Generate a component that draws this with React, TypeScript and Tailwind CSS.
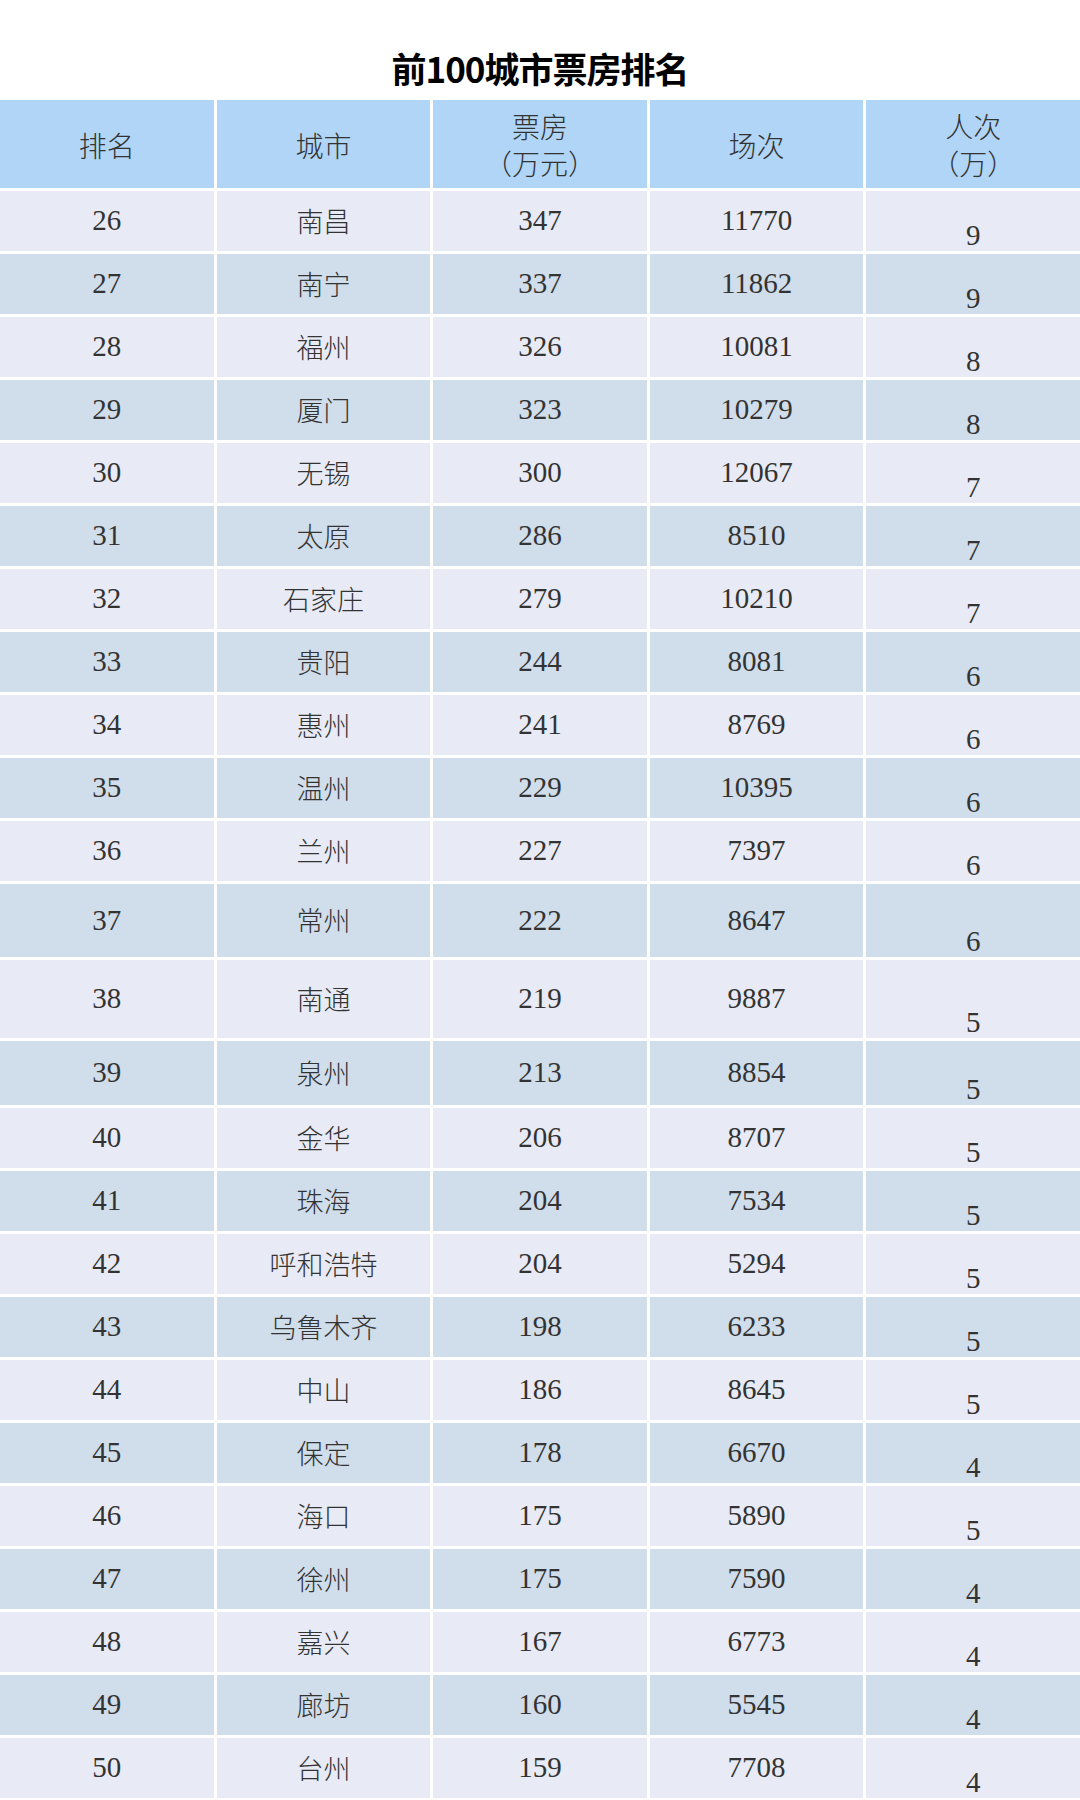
import React from 'react';

type Row = { rank: number; city: string; box: number; shows: number; people: number; h?: string };

const rows: Row[] = [
  { rank: 26, city: '南昌', box: 347, shows: 11770, people: 9 },
  { rank: 27, city: '南宁', box: 337, shows: 11862, people: 9 },
  { rank: 28, city: '福州', box: 326, shows: 10081, people: 8 },
  { rank: 29, city: '厦门', box: 323, shows: 10279, people: 8 },
  { rank: 30, city: '无锡', box: 300, shows: 12067, people: 7 },
  { rank: 31, city: '太原', box: 286, shows: 8510, people: 7 },
  { rank: 32, city: '石家庄', box: 279, shows: 10210, people: 7 },
  { rank: 33, city: '贵阳', box: 244, shows: 8081, people: 6 },
  { rank: 34, city: '惠州', box: 241, shows: 8769, people: 6 },
  { rank: 35, city: '温州', box: 229, shows: 10395, people: 6 },
  { rank: 36, city: '兰州', box: 227, shows: 7397, people: 6 },
  { rank: 37, city: '常州', box: 222, shows: 8647, people: 6, h: 'h-[73px]' },
  { rank: 38, city: '南通', box: 219, shows: 9887, people: 5, h: 'h-[78px]' },
  { rank: 39, city: '泉州', box: 213, shows: 8854, people: 5, h: 'h-[64px]' },
  { rank: 40, city: '金华', box: 206, shows: 8707, people: 5 },
  { rank: 41, city: '珠海', box: 204, shows: 7534, people: 5 },
  { rank: 42, city: '呼和浩特', box: 204, shows: 5294, people: 5 },
  { rank: 43, city: '乌鲁木齐', box: 198, shows: 6233, people: 5 },
  { rank: 44, city: '中山', box: 186, shows: 8645, people: 5 },
  { rank: 45, city: '保定', box: 178, shows: 6670, people: 4 },
  { rank: 46, city: '海口', box: 175, shows: 5890, people: 5 },
  { rank: 47, city: '徐州', box: 175, shows: 7590, people: 4 },
  { rank: 48, city: '嘉兴', box: 167, shows: 6773, people: 4 },
  { rank: 49, city: '廊坊', box: 160, shows: 5545, people: 4 },
  { rank: 50, city: '台州', box: 159, shows: 7708, people: 4 },
];

const serif = "font-['Liberation_Serif','Noto_Sans_CJK_SC',serif]";

export default function App() {
  return (
    <div className="w-[1080px] h-[1800px] overflow-hidden bg-white">
      <h1 className="h-[100px] pt-[36px] flex items-center justify-center text-[35px] font-bold text-black font-['Noto_Sans_CJK_SC',sans-serif] tracking-[-1px]">
        前100城市票房排名
      </h1>

      <div className="grid grid-cols-5 gap-[3px] text-[#333]">
        {/* 表头 */}
        {[['排名'], ['城市'], ['票房', '（万元）'], ['场次'], ['人次', '（万）']].map((lines, i) => (
          <div
            key={i}
            className="h-[88px] bg-[#b0d5f6] flex flex-col items-center justify-center pt-[2px] text-[28px] leading-[37px] font-['Noto_Sans_CJK_SC',sans-serif] font-light"
          >
            {lines.map((t) => (
              <span key={t}>{t}</span>
            ))}
          </div>
        ))}

        {rows.map((r, idx) => {
          const bg = idx % 2 === 0 ? 'bg-[#e8ebf5]' : 'bg-[#d0ddeb]';
          const h = r.h || 'h-[60px]';
          return (
            <React.Fragment key={r.rank}>
              <div className={`${h} ${bg} ${serif} flex items-center justify-center text-[29px]`}>{r.rank}</div>
              <div className={`${h} ${bg} flex items-center justify-center text-[27px] font-['Noto_Sans_CJK_SC',sans-serif] font-light`}>
                {r.city}
              </div>
              <div className={`${h} ${bg} ${serif} flex items-center justify-center text-[29px]`}>{r.box}</div>
              <div className={`${h} ${bg} ${serif} flex items-center justify-center text-[29px]`}>{r.shows}</div>
              <div className={`${h} ${bg} ${serif} flex items-end justify-center text-[29px] leading-none pb-[1px]`}>
                {r.people}
              </div>
            </React.Fragment>
          );
        })}
      </div>
    </div>
  );
}
